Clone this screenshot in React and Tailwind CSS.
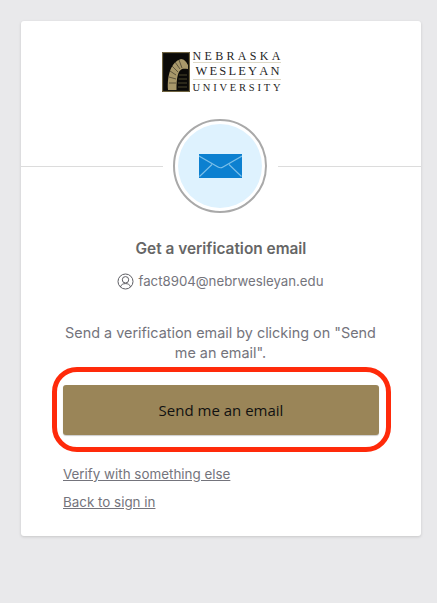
export default function App() {
  const sans = { fontFamily: 'Inter, "Open Sans", sans-serif' };
  return (
    <div className="bg-[#e9e9eb] pt-[21px] pl-[21px] font-['Inter',sans-serif]" style={{ overflow: 'hidden', height: 603 }}>
      <div className="relative w-[400px] h-[515px] bg-white rounded-[3px] shadow-[0_1px_3px_rgba(0,0,0,0.15)] flex flex-col items-center">
        {/* Logo */}
        <div className="mt-[29px] flex items-start h-[42px] w-[119px]">
          <svg width="28" height="40" viewBox="0 0 28 40" className="shrink-0 mt-[2px]">
            <rect x="0" y="0" width="28" height="40" fill="#0b0a08" />
            <rect x="0.6" y="0.6" width="26.8" height="38.8" fill="none" stroke="#7a6d47" strokeWidth="1" />
            <path d="M6 38 C5 23 9 10 19 7 C22 7 24.5 10 26 13 L26 17 C24 17 22 16.5 20 17 C16 19 14.5 25 14.5 38 Z" fill="#a8986a" />
            <path d="M8 19 L14 23 M10 14 L16 20 M13 10 L18 17 M17 8 L20 16 M7 25 L14 27 M7 31 L14 31" stroke="#4a4230" strokeWidth="0.8" />
            <path d="M17 23 L25 23 M16.5 27 L25 27 M16 31 L25 31 M16 35 L25 35" stroke="#5e5539" strokeWidth="0.8" />
          </svg>
          <div className="relative ml-[3px] flex flex-col w-[88px] font-['Liberation_Serif',serif] text-[#1f1f1f] text-[12px]">
            <div className="h-[12px] leading-[12px] flex justify-between">
              {'NEBRASKA'.split('').map((c, i) => <span key={i}>{c}</span>)}
            </div>
            <div className="h-[1px] bg-[#ddd8c6] mt-[0px] mb-[2px]" />
            <div className="h-[13px] leading-[13px] flex justify-between pl-[3px] pr-[1px] text-[12.5px]">
              {'WESLEYAN'.split('').map((c, i) => <span key={i}>{c}</span>)}
            </div>
            <div className="h-[1px] bg-[#ddd8c6] mt-[1px] mb-[2px]" />
            <div className="h-[11px] leading-[11px] flex justify-between text-[10.5px]">
              {'UNIVERSITY'.split('').map((c, i) => <span key={i}>{c}</span>)}
            </div>
          </div>
        </div>

        {/* Divider + icon */}
        <div className="mt-[26px] w-full flex items-center h-[96px]">
          <div className="h-px w-[142px] bg-[#dcdcdc]" />
          <div className="ml-[10px] mr-[11px] w-[94px] h-[94px] rounded-full border-2 border-[#a9a9a9] bg-white p-[3px] shrink-0">
            <div className="w-full h-full rounded-full bg-[#def2fe] flex items-center justify-center">
              <svg width="43" height="24" viewBox="0 0 43 24" className="ml-[1px]">
                <rect width="43" height="24" fill="#0c80d0" />
                <path d="M0 2 L19 13 Q21.5 14.5 24 13 L43 2" fill="none" stroke="#7cc0ea" strokeWidth="1.1" />
                <path d="M0.5 22.5 L13 10.5 M42.5 22.5 L30 10.5" fill="none" stroke="#7cc0ea" strokeWidth="1.1" />
              </svg>
            </div>
          </div>
          <div className="h-px flex-1 bg-[#dcdcdc]" />
        </div>

        {/* Title */}
        <h2 className="mt-[25px] text-[15.4px] leading-[20px] font-semibold text-[#666666]" style={sans}>Get a verification email</h2>

        {/* Identity */}
        <div className="mt-[12px] -ml-[1px] flex items-center gap-[4px] text-[#74747c] text-[13.25px] leading-[20px]">
          <svg width="17" height="17" viewBox="0 0 17 17" fill="none" stroke="#5e5e64" strokeWidth="1">
            <circle cx="8.5" cy="8.5" r="7.5" />
            <circle cx="8.5" cy="6.8" r="3.2" />
            <path d="M3.4 14 C4.2 11.5 6 10.6 8.5 10.6 C11 10.6 12.8 11.5 13.6 14" />
          </svg>
          <span>fact8904@nebrwesleyan.edu</span>
        </div>

        {/* Body */}
        <p className="mt-[32px] -ml-[1px] w-[320px] text-center text-[14.4px] leading-[20px] text-[#74747c]">
          Send a verification email by clicking on "Send me an email".
        </p>

        {/* Button */}
        <button className="mt-[22px] w-[316px] h-[50px] rounded-[3px] bg-[#9a8558] text-[15px] text-[#111111] font-['Open_Sans',sans-serif] shadow-[0_1px_1px_rgba(0,0,0,0.2)]">
          Send me an email
        </button>

        {/* Links */}
        <div className="mt-[29px] w-[316px] flex flex-col gap-[8px] text-[13.4px] leading-[20px] text-[#74747c]">
          <a className="underline self-start">Verify with something else</a>
          <a className="underline self-start">Back to sign in</a>
        </div>

        {/* Highlight */}
        <div className="absolute left-[31px] top-[346px] w-[339px] h-[85px] rounded-[25px] border-[5px] border-[#ff2a0a]" />
      </div>
    </div>
  );
}
